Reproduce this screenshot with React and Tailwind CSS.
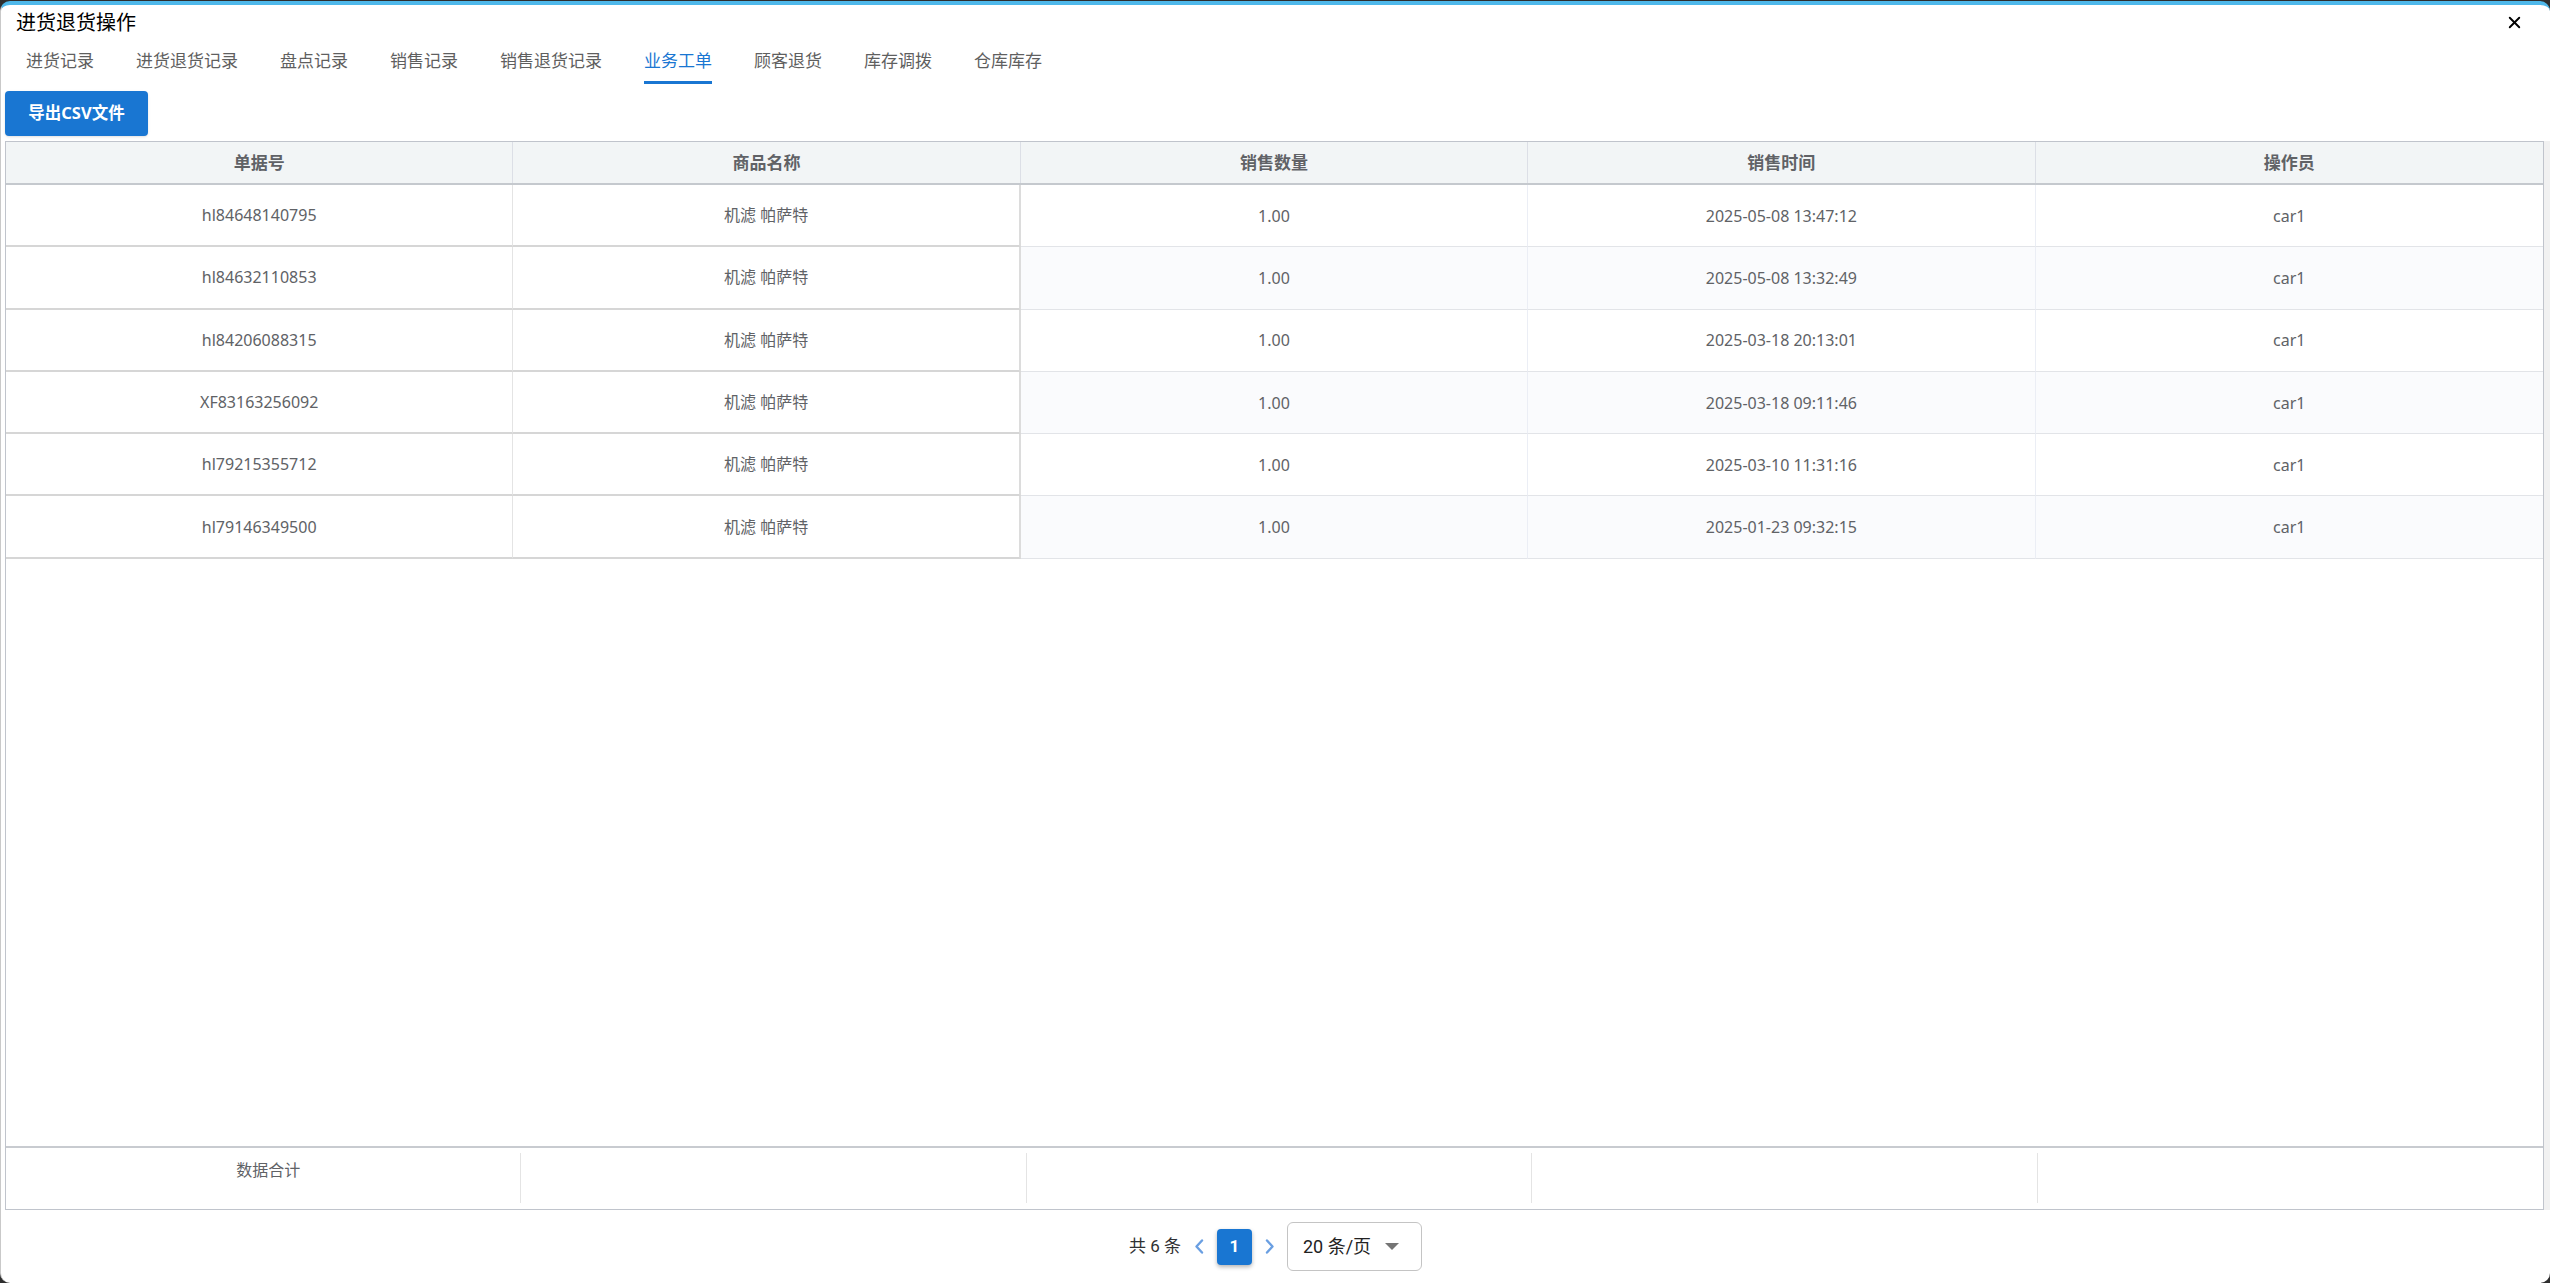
import { X } from 'lucide-react';

const tabs = ['进货记录', '进货退货记录', '盘点记录', '销售记录', '销售退货记录', '业务工单', '顾客退货', '库存调拨', '仓库库存'];
const columns = ['单据号', '商品名称', '销售数量', '销售时间', '操作员'];

const rows = [
    { no: 'hl84648140795', name: '机滤 帕萨特', qty: '1.00', time: '2025-05-08 13:47:12', user: 'car1' },
    { no: 'hl84632110853', name: '机滤 帕萨特', qty: '1.00', time: '2025-05-08 13:32:49', user: 'car1' },
    { no: 'hl84206088315', name: '机滤 帕萨特', qty: '1.00', time: '2025-03-18 20:13:01', user: 'car1' },
    { no: 'XF83163256092', name: '机滤 帕萨特', qty: '1.00', time: '2025-03-18 09:11:46', user: 'car1' },
    { no: 'hl79215355712', name: '机滤 帕萨特', qty: '1.00', time: '2025-03-10 11:31:16', user: 'car1' },
    { no: 'hl79146349500', name: '机滤 帕萨特', qty: '1.00', time: '2025-01-23 09:32:15', user: 'car1' },
];

const font = { fontFamily: '"Noto Sans", "Noto Sans CJK SC", sans-serif' };

function Chevron({ dir }) {
    return (
        <svg width="10" height="15" viewBox="0 0 10 15" className="shrink-0">
            <polyline
                points={dir === 'left' ? '8,1.5 2.5,7.5 8,13.5' : '2,1.5 7.5,7.5 2,13.5'}
                fill="none"
                stroke="#6a9fe2"
                strokeWidth="2.4"
                strokeLinecap="round"
                strokeLinejoin="round"
            />
        </svg>
    );
}

export default function App() {
    const active = '业务工单';

    return (
        <div className="w-full h-[1283px] bg-[#2e2e2e] pt-[1px] overflow-hidden" style={font}>
            <div className="h-full flex flex-col bg-white rounded-[10px] border-t-[4px] border-t-[#4fb8ea] border-l border-l-[#c9c9c9]">
                {/* title */}
                <div className="h-[35px] flex items-center justify-between pl-[15px] pr-[26px]">
                    <span className="text-[20px] leading-[28px] text-black">进货退货操作</span>
                    <X size={19} strokeWidth={2.4} className="text-black" />
                </div>

                {/* tabs */}
                <div className="flex pl-[4px]">
                    {tabs.map((t) => (
                        <div key={t} className="px-[21px] pt-[9px] flex flex-col items-stretch">
                            <span className={`text-[17px] leading-[24px] whitespace-nowrap ${t === active ? 'text-[#1976d2]' : 'text-[#5f5f5f]'}`}>{t}</span>
                            <div className={`h-[3px] mt-[8px] ${t === active ? 'bg-[#1976d2]' : 'bg-transparent'}`}></div>
                        </div>
                    ))}
                </div>

                <div className="pl-[4px] mt-[7px]">
                    <button className="w-[143px] h-[45px] rounded-[4px] bg-[#1976d2] text-white font-bold text-[16.5px] shadow-sm">
                        导出CSV文件
                    </button>
                </div>

                {/* table */}
                <div className="flex mt-[5px] pl-[4px] h-[1069px]">
                    <div className="flex-1 flex flex-col border border-[#c0c4cc]">
                        <div className="flex h-[43px] bg-[#f2f5f6] border-b-2 border-b-[#c5c9ce]">
                            {columns.map((c, i) => (
                                <div key={c} className={`w-1/5 flex items-center justify-center text-[17px] font-bold text-[#606266] ${i < 4 ? 'border-r border-r-[#dcdfe6]' : ''}`}>
                                    {c}
                                </div>
                            ))}
                        </div>

                        <div className="flex-1">
                            {rows.map((r, idx) => {
                                const stripe = idx % 2 === 1 ? 'bg-[#fafbfd]' : 'bg-white';
                                return (
                                    <div key={r.no} className="flex h-[62.3px] text-[16px] text-[#606266]">
                                        <div className="w-1/5 flex items-center justify-center border-b-2 border-b-[#d6d6d6] border-r border-r-[#e4e4e4]">{r.no}</div>
                                        <div className="w-1/5 flex items-center justify-center border-b-2 border-b-[#d6d6d6] border-r-2 border-r-[#dcdcdc]">{r.name}</div>
                                        <div className={`w-1/5 flex items-center justify-center border-b border-b-[#e2e4e8] border-r border-r-[#ebeef5] ${stripe}`}>{r.qty}</div>
                                        <div className={`w-1/5 flex items-center justify-center border-b border-b-[#e2e4e8] border-r border-r-[#ebeef5] ${stripe}`}>{r.time}</div>
                                        <div className={`w-1/5 flex items-center justify-center border-b border-b-[#e2e4e8] ${stripe}`}>{r.user}</div>
                                    </div>
                                );
                            })}
                        </div>

                        {/* summary */}
                        <div className="h-[63px] border-t-2 border-t-[#c8cbd0] flex pl-[10px]">
                            {columns.map((c, i) => (
                                <div key={c} className={`w-1/5 mt-[5px] h-[50px] flex justify-center pt-[5px] text-[16px] leading-[24px] text-[#606266] ${i < 4 ? 'border-r border-r-[#e4e4e4]' : ''}`}>
                                    {i === 0 ? '数据合计' : ''}
                                </div>
                            ))}
                        </div>
                    </div>
                    <div className="w-[6px] bg-[#f1f1f1]"></div>
                </div>

                {/* pagination */}
                <div className="flex-1 flex items-center justify-center text-[#303133]" style={{ fontFamily: 'Roboto, "Noto Sans CJK SC", sans-serif' }}>
                    <span className="text-[17px] whitespace-nowrap">共 6 条</span>
                    <div className="ml-[13px]"><Chevron dir="left" /></div>
                    <div className="ml-[13px] w-[35px] h-[36px] rounded-[4px] bg-[#1976d2] text-white font-bold text-[17px] flex items-center justify-center shadow-[0_2px_4px_rgba(0,0,0,0.3)]">1</div>
                    <div className="ml-[13px]"><Chevron dir="right" /></div>
                    <div className="ml-[12px] w-[135px] h-[49px] border border-[#c4c4c4] rounded-[6px] flex items-center justify-between pl-[15px] pr-[22px]">
                        <span className="text-[18px] text-[#222]">20 条/页</span>
                        <svg width="14" height="7" viewBox="0 0 14 7">
                            <polygon points="0,0 14,0 7,7" fill="#757575" />
                        </svg>
                    </div>
                </div>
            </div>
        </div>
    );
}
